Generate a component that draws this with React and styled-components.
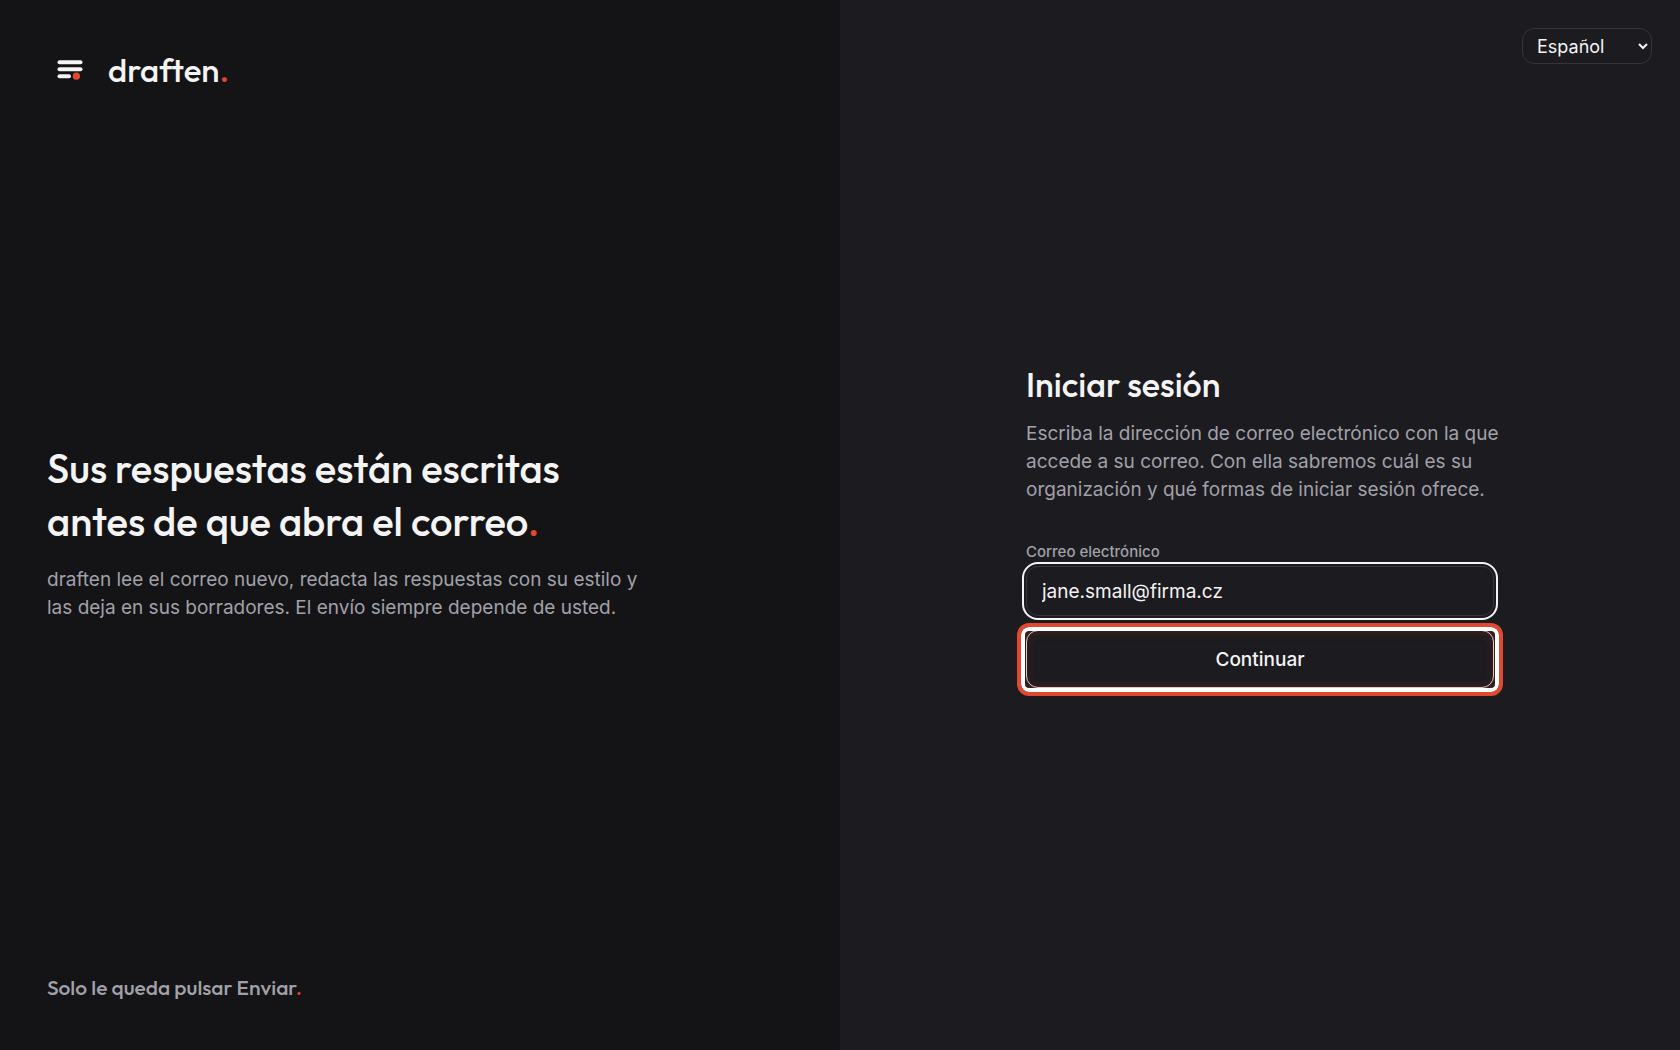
import styled, { createGlobalStyle } from "styled-components"

const GlobalStyle = createGlobalStyle`
  * {
    box-sizing: border-box;
  }
  body {
    margin: 0;
    background: #1c1b1f;
    color: #f4f4f5;
    font-family: Inter, sans-serif;
  }
  h1, h2, p {
    margin: 0;
  }
`

const display = "Outfit, Lato, sans-serif"

const Page = styled.main`
  display: grid;
  grid-template-columns: 1fr 1fr;
  min-height: 100vh;
`

const Intro = styled.section`
  display: flex;
  flex-direction: column;
  justify-content: space-between;
  padding: 47px;
  background: #141416;
`

const Brand = styled.a`
  display: flex;
  align-items: center;
  gap: 15px;
  color: #f4f4f5;
  font-family: ${display};
  font-size: 33px;
  font-weight: 500;
  line-height: 46px;
  text-decoration: none;
`

const Dot = styled.span`
  color: #e0492f;
`

const Pitch = styled.div`
  display: flex;
  flex-direction: column;
  gap: 18px;
  max-width: 600px;
`

const Headline = styled.h1`
  font-family: ${display};
  font-size: 40px;
  font-weight: 500;
  line-height: 53px;
`

const Text = styled.p`
  color: #a1a1aa;
  font-size: 19px;
  line-height: 28px;
  white-space: ${(props) => (props.$nowrap ? "nowrap" : "normal")};
`

const Tagline = styled.p`
  color: #a1a1aa;
  font-family: ${display};
  font-size: 21px;
  font-weight: 500;
  line-height: 32px;
`

/* the last row mirrors the language row so the form stays centred */
const Panel = styled.section`
  display: grid;
  grid-template-rows: 36px 1fr 36px;
  padding: 28px;
`

const Language = styled.select`
  justify-self: end;
  width: 130px;
  padding: 0 10px;
  border: 1px solid #36353b;
  border-radius: 12px;
  background: #1c1b1f;
  color: #f4f4f5;
  font: 400 18px Inter, sans-serif;
`

const Form = styled.form`
  display: flex;
  flex-direction: column;
  width: 100%;
  max-width: 468px;
  margin: auto;
`

const Title = styled.h2`
  margin-bottom: 12px;
  font-family: ${display};
  font-size: 34px;
  font-weight: 500;
  line-height: 46px;
`

const Label = styled.label`
  margin: 39px 0 5px;
  color: #a1a1aa;
  font-size: 15px;
  font-weight: 500;
  line-height: 18px;
`

const Input = styled.input`
  height: 50px;
  padding: 0 15px;
  border: 1px solid #36353b;
  border-radius: 12px;
  outline: 2px solid #f4f4f5;
  outline-offset: 2px;
  background: #1c1b1f;
  color: #f4f4f5;
  font: 400 19px Inter, sans-serif;
`

const Submit = styled.button`
  position: relative;
  height: 58px;
  margin-top: 14px;
  border: 1px solid #ead8d2;
  border-radius: 12px;
  background: #1c1b1f;
  color: #f4f4f5;
  font: 500 19px Inter, sans-serif;

  &::after {
    content: "";
    position: absolute;
    inset: -8px -10px -9px;
    border: 4px solid #e0492f;
    border-radius: 12px;
    box-shadow: inset 0 0 0 4px #fff, inset 0 0 12px 4px rgba(224, 73, 47, 0.25);
  }
`

const Logo = () => (
  <svg width="46" height="46" viewBox="0 0 46 46" aria-hidden="true">
    <g stroke="#f4f4f5" strokeWidth="4" strokeLinecap="round">
      <path d="M12.5 15.2H33.5" />
      <path d="M12.5 22.2H33.5" />
      <path d="M12.5 29.2H22" />
    </g>
    <circle cx="29.4" cy="29.2" r="3.6" fill="#e0492f" />
  </svg>
)

export default function App() {
  return (
    <Page>
      <GlobalStyle />
      <Intro>
        <Brand href="#">
          <Logo />
          <span>draften<Dot>.</Dot></span>
        </Brand>
        <Pitch>
          <Headline>
            Sus respuestas están escritas<br />
            antes de que abra el correo<Dot>.</Dot>
          </Headline>
          <Text>
            draften lee el correo nuevo, redacta las respuestas con su estilo y
            las deja en sus borradores. El envío siempre depende de usted.
          </Text>
        </Pitch>
        <Tagline>Solo le queda pulsar Enviar<Dot>.</Dot></Tagline>
      </Intro>
      <Panel>
        <Language aria-label="Idioma" defaultValue="es">
          <option value="es">Español</option>
          <option value="en">English</option>
          <option value="cs">Čeština</option>
        </Language>
        <Form onSubmit={(e) => e.preventDefault()}>
          <Title>Iniciar sesión</Title>
          <Text $nowrap>
            Escriba la dirección de correo electrónico con la que<br />
            accede a su correo. Con ella sabremos cuál es su<br />
            organización y qué formas de iniciar sesión ofrece.
          </Text>
          <Label htmlFor="email">Correo electrónico</Label>
          <Input id="email" type="email" defaultValue="jane.small@firma.cz" />
          <Submit type="submit">Continuar</Submit>
        </Form>
      </Panel>
    </Page>
  )
}
